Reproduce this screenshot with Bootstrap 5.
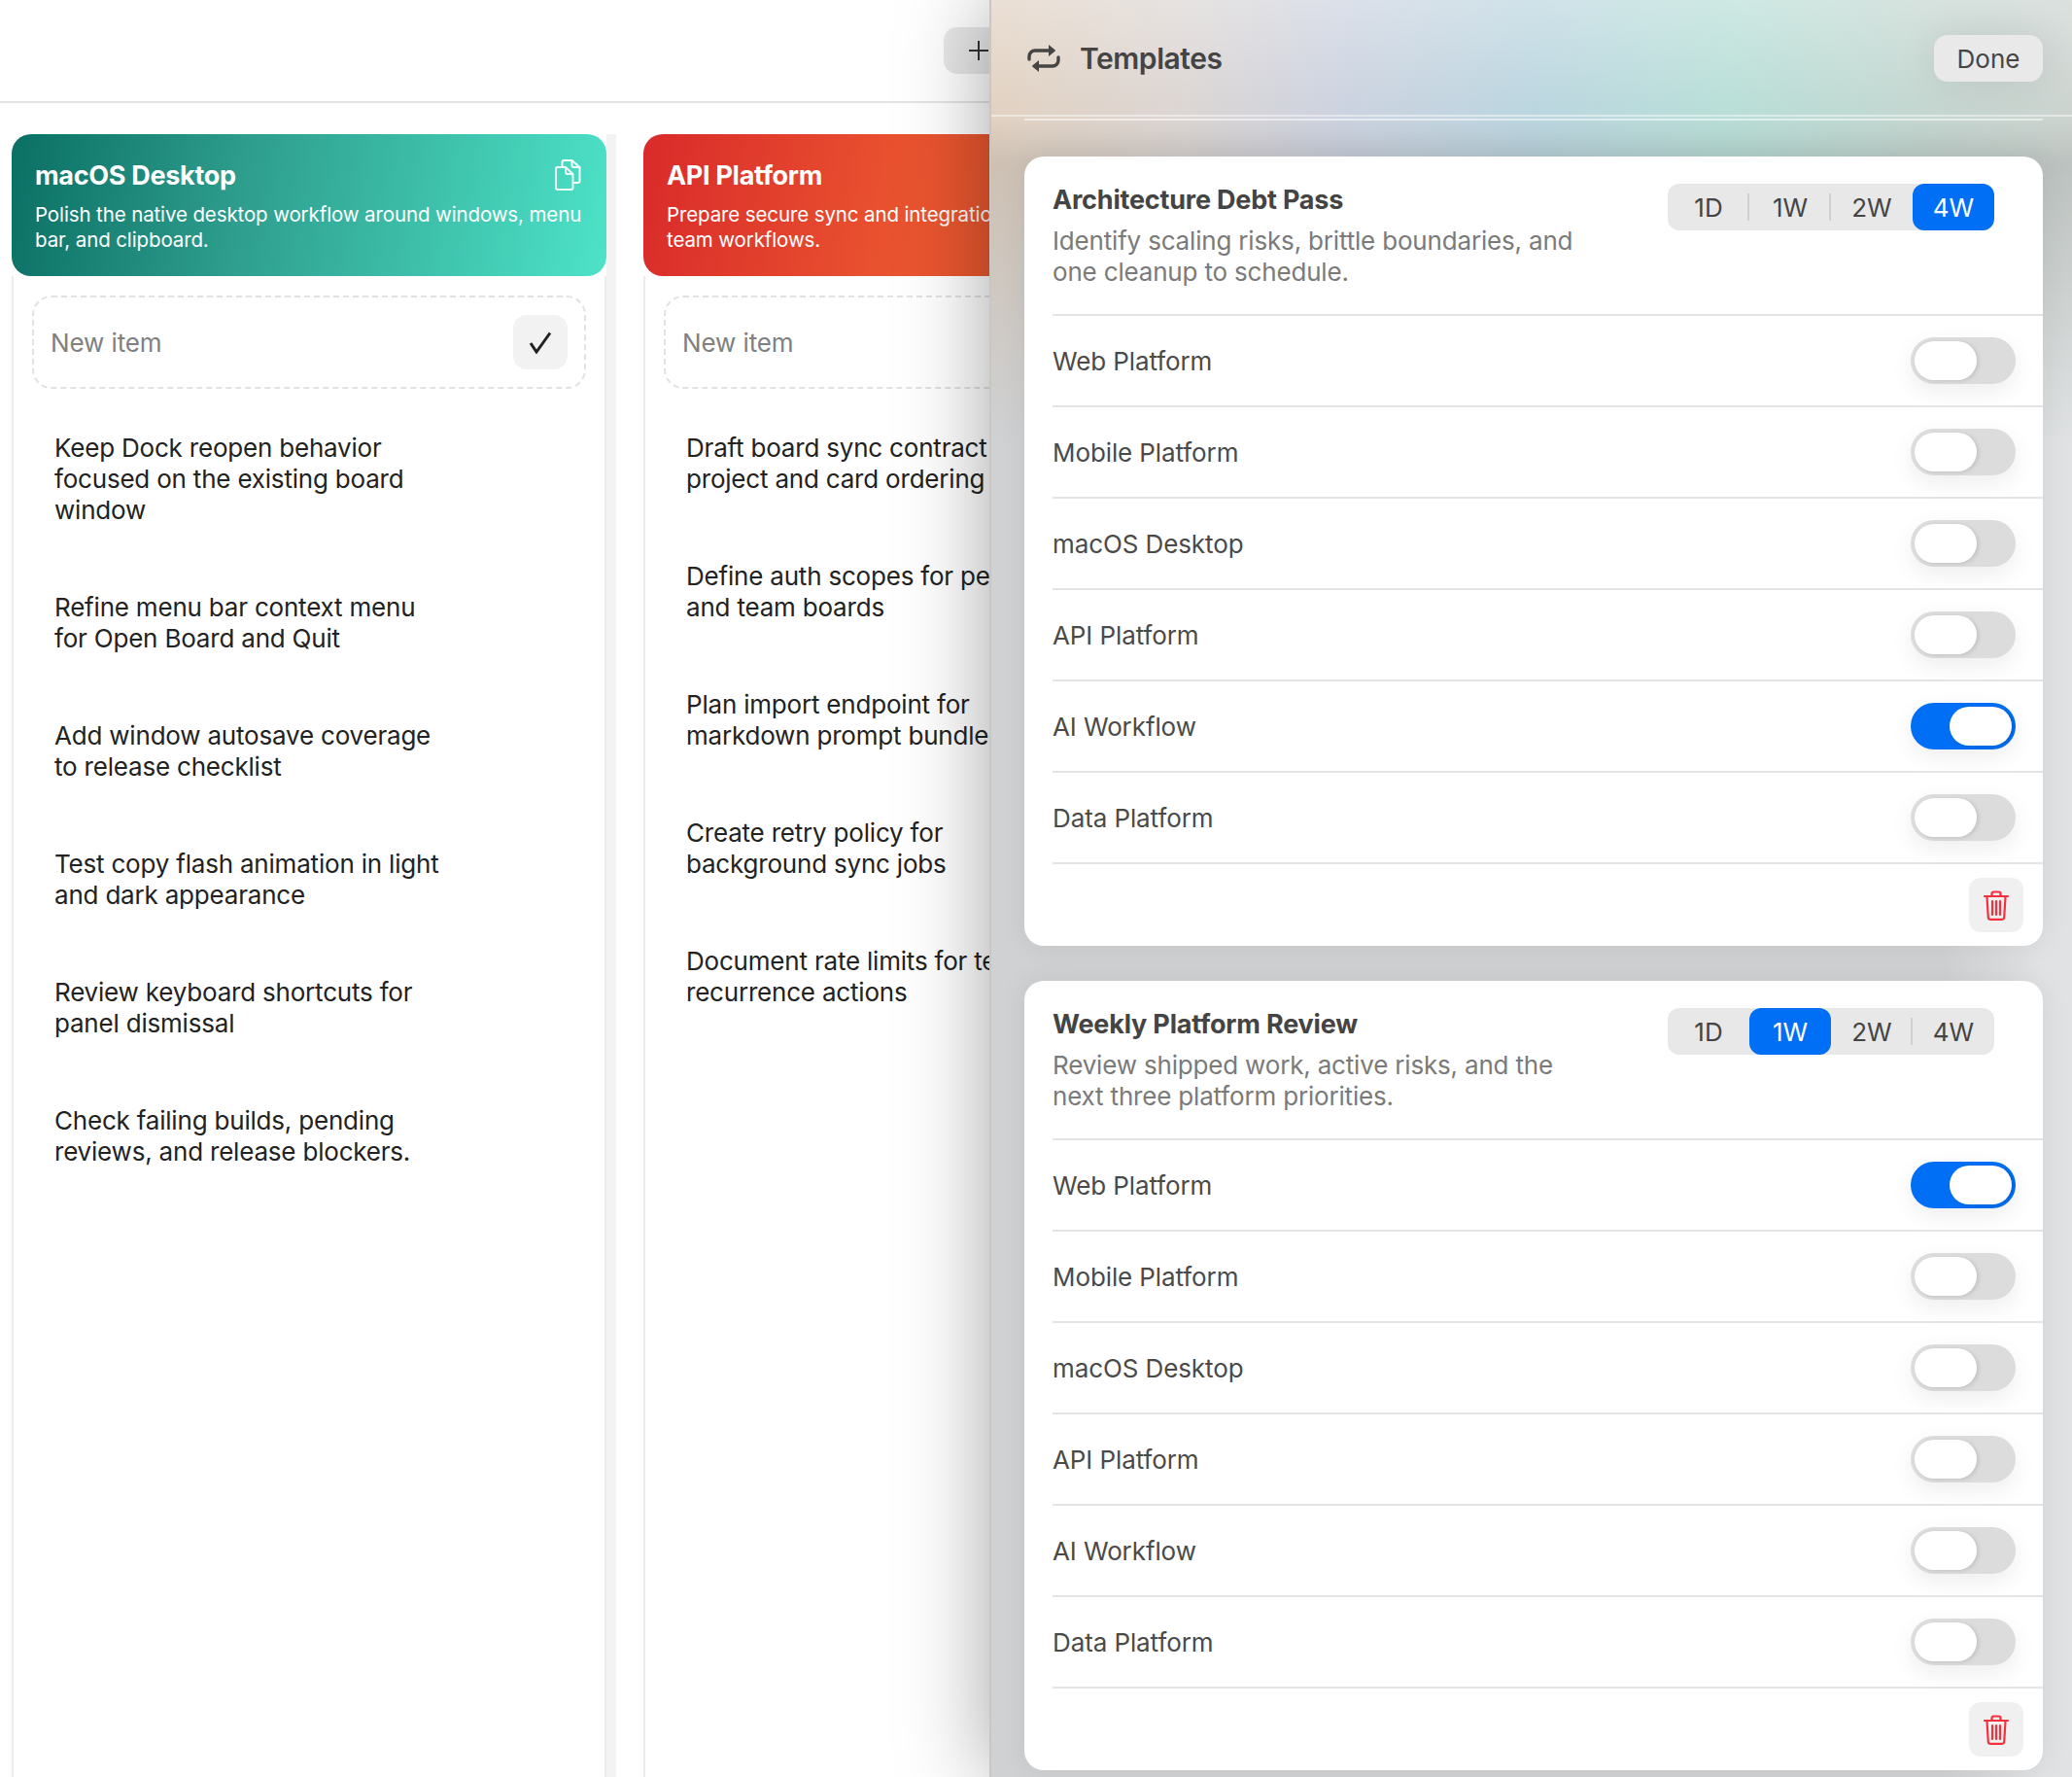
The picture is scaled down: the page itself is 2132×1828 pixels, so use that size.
<!doctype html>
<html lang="en">
<head>
<meta charset="utf-8">
<title>Templates</title>
<link href="https://cdn.jsdelivr.net/npm/bootstrap@5.3.0/dist/css/bootstrap.min.css" rel="stylesheet">
<style>
html,body{height:100%;overflow:hidden;background:#fff}
body{font-family:Inter,"Liberation Sans",sans-serif;font-size:26px;letter-spacing:-.1px}
.stage{position:relative;width:2132px;height:1828px;overflow:hidden}
.topbar{height:106px;border-bottom:2px solid #e4e4e4;padding:28px 0 0 971px}
.addbtn{width:72px;height:48px;background:#e8e8e8;border-radius:14px;padding:0 0 0 26px;border:0}
.board{padding:32px 0 0 12px;width:2400px}
.kcol{width:612px;flex:none}
.kstrip{width:10px;margin-right:28px;background:#f3f3f3;flex:none}
.khead{height:146px;border-radius:20px;padding:24px 24px 0 24px;color:#fff;position:relative}
.kgreen{background:linear-gradient(100deg,#0b6f64,#2f9f8f 40%,#4de3c8 100%)}
.kred{background:linear-gradient(100deg,#d92a2a,#e9522f 42%,#f0692f 100%)}
.ktitle{font-size:27px;font-weight:700;line-height:38px;letter-spacing:-.3px}
.kdesc{font-size:20.500px;line-height:26px;margin-top:8px;letter-spacing:-.12px;white-space:nowrap}
.kcopy{position:absolute;top:26px;right:26px}
.kbody{height:1600px;border-inline:2px solid #ececec;padding:20px 19px 0 19px}
.newbox{height:96px;border:2px dashed #e2e2e2;border-radius:20px;padding:0 17px}
.newbox span{color:#808080}
.chk{width:56px;height:56px;background:#f2f2f2;border-radius:14px;border:0;padding:0}
.kitems{margin:45px 0 0 23px}
.kitem{line-height:32px;color:#222;padding-bottom:68px;white-space:nowrap;letter-spacing:-.2px}
.panel{position:absolute;z-index:1;top:0;right:0;bottom:0;width:1114px;border-left:2px solid #c9c7c4;box-shadow:0 0 85px rgba(0,0,0,.36);
 background:
 linear-gradient(to bottom,rgba(255,255,255,.3) 0,rgba(255,255,255,0) 110px,rgba(90,90,90,0) 120px,rgba(90,90,90,.14) 165px),
 linear-gradient(to right,#e2d2c2 0,#dcd6d4 18%,#cdd3e0 32%,#bcd6e0 50%,#b9dfd8 68%,#c6d6d0 88%,#cdd4d0 100%);
}
.panel::before{content:"";position:absolute;inset:0;z-index:-1;
 background:linear-gradient(to right,#cfd1d3 0,#cfd1d3 88%,#e0e2e3 97%,#e0e2e3 100%);
 -webkit-mask-image:linear-gradient(to bottom,transparent 170px,#000 460px);mask-image:linear-gradient(to bottom,transparent 170px,#000 460px)}
.phead{height:120px;border-bottom:2px solid rgba(255,255,255,.45);padding:2px 30px 0 37px}
.ptitle{font-size:30px;font-weight:600;color:#444;margin-left:20px;letter-spacing:-.45px}
.donebtn{width:112px;height:48px;background:#e9e9e9;border:0;border-radius:14px;font-size:26px;color:#454545;padding:0;box-shadow:0 0 44px rgba(0,0,0,.09)}
.pline{height:2px;background:rgba(255,255,255,.55);margin:2px 30px 0 34px}
.tcard{margin:37px 30px 36px 34px;height:812px;border:0;border-radius:20px;background:#fff;box-shadow:0 0 30px rgba(0,0,0,.07);padding:28px 0 0 29px;overflow:hidden}
.tcard+.tcard{margin-top:0}
.thead{height:134px;padding-right:50px}
.ttitle{font-size:27px;font-weight:700;line-height:32px;color:#444;letter-spacing:-.2px;margin-top:1px}
.tsub{color:#7a7a7a;line-height:32px;margin-top:10px;white-space:nowrap;letter-spacing:-.18px}
.seg{width:336px;height:48px;background:#e8e8e8;border-radius:12px;flex:none}
.segbtn{width:84px;height:48px;border:0;padding:0;background:transparent;color:#444;font-size:26px;position:relative;border-radius:12px}
.segbtn.on{background:#006ef5;color:#fff}
.segbtn.sp::after{content:"";position:absolute;right:0;top:10px;height:28px;width:2px;background:#d0d0d0}
.trow{height:94px;border-top:2px solid #e4e4e4;padding-right:28px;color:#4a4a4a}
.tgl{width:108px;height:48px;border-radius:24px;background:#dcdcdc;padding:4px;box-shadow:0 8px 24px rgba(0,0,0,.07);flex:none}
.tgl.on{background:#006ef5;justify-content:flex-end}
.knob{width:64px;height:40px;border-radius:20px;background:#fff;box-shadow:2px 1px 4px rgba(0,0,0,.12)}
.tfoot{border-top:2px solid #e4e4e4;padding:14px 20px 0 0}
.trash{width:56px;height:56px;background:#f0f0f0;border-radius:12px;border:0;padding:0}
</style>
</head>
<body>
<div class="stage">
  <div class="topbar">
    <button class="addbtn d-flex align-items-center justify-content-start" aria-label="Add"><svg width="20" height="20" viewBox="0 0 20 20" fill="none" stroke="#333" stroke-width="2"><path d="M10 0V20M0 10H20"/></svg></button>
  </div>
  <div class="board d-flex align-items-stretch">
    <div class="kcol">
      <div class="khead kgreen">
        <div class="ktitle">macOS Desktop</div>
        <div class="kdesc">Polish the native desktop workflow around windows, menu<br>bar, and clipboard.</div>
        <svg class="kcopy" width="27" height="32" viewBox="0 0 27 32" fill="none" stroke="#f0fdfa" stroke-width="2" stroke-linejoin="round"><path d="M3 8h8l7.500 7v14a2 2 0 0 1-2 2H3a2 2 0 0 1-2-2V10a2 2 0 0 1 2-2z"/><path d="M11 8v5a2 2 0 0 0 2 2h5.500"/><path d="M7.500 8V3a2 2 0 0 1 2-2h8l8 7v14a2 2 0 0 1-2 2h-5.500"/><path d="M17.500 1v5a2 2 0 0 0 2 2h6"/></svg>
      </div>
      <div class="kbody">
        <div class="newbox d-flex align-items-center justify-content-between">
          <span>New item</span>
          <button class="chk d-flex align-items-center justify-content-center" aria-label="Add item"><svg width="24" height="23" viewBox="0 0 24 23" fill="none" stroke="#222" stroke-width="3"><path d="M2 12L8 21L22 1.500"/></svg></button>
        </div>
        <div class="kitems">
          <div class="kitem">Keep Dock reopen behavior<br>focused on the existing board<br>window</div>
          <div class="kitem">Refine menu bar context menu<br>for Open Board and Quit</div>
          <div class="kitem">Add window autosave coverage<br>to release checklist</div>
          <div class="kitem">Test copy flash animation in light<br>and dark appearance</div>
          <div class="kitem">Review keyboard shortcuts for<br>panel dismissal</div>
          <div class="kitem">Check failing builds, pending<br>reviews, and release blockers.</div>
        </div>
      </div>
    </div>
    <div class="kstrip"></div>
    <div class="kcol">
      <div class="khead kred">
        <div class="ktitle">API Platform</div>
        <div class="kdesc">Prepare secure sync and integration APIs for<br>team workflows.</div>
      </div>
      <div class="kbody">
        <div class="newbox d-flex align-items-center justify-content-between">
          <span>New item</span>
        </div>
        <div class="kitems">
          <div class="kitem">Draft board sync contract for<br>project and card ordering</div>
          <div class="kitem">Define auth scopes for personal<br>and team boards</div>
          <div class="kitem">Plan import endpoint for<br>markdown prompt bundles</div>
          <div class="kitem">Create retry policy for<br>background sync jobs</div>
          <div class="kitem">Document rate limits for team<br>recurrence actions</div>
        </div>
      </div>
    </div>
  </div>

  <aside class="panel">
    <div class="phead d-flex align-items-center">
      <svg width="34" height="28" viewBox="0 0 34 28" fill="#444"><path d="M2 15V12a6 6 0 0 1 6-6H23" fill="none" stroke="#444" stroke-width="3.400" stroke-linecap="round"/><path d="M22 0l6.500 5.200a1 1 0 0 1 0 1.600L22 12z"/><path d="M32 13v3a6 6 0 0 1-6 6H11" fill="none" stroke="#444" stroke-width="3.400" stroke-linecap="round"/><path d="M12 16l-6.500 5.200a1 1 0 0 0 0 1.600L12 28z"/></svg>
      <div class="ptitle">Templates</div>
      <button class="donebtn ms-auto">Done</button>
    </div>
    <div class="pline"></div>

    <div class="card tcard">
      <div class="thead d-flex justify-content-between">
        <div>
          <div class="ttitle">Architecture Debt Pass</div>
          <div class="tsub">Identify scaling risks, brittle boundaries, and<br>one cleanup to schedule.</div>
        </div>
        <div class="seg d-flex">
          <button class="segbtn sp">1D</button><button class="segbtn sp">1W</button><button class="segbtn">2W</button><button class="segbtn on">4W</button>
        </div>
      </div>
      <div class="trow d-flex align-items-center justify-content-between"><span>Web Platform</span><div class="tgl d-flex"><div class="knob"></div></div></div>
      <div class="trow d-flex align-items-center justify-content-between"><span>Mobile Platform</span><div class="tgl d-flex"><div class="knob"></div></div></div>
      <div class="trow d-flex align-items-center justify-content-between"><span>macOS Desktop</span><div class="tgl d-flex"><div class="knob"></div></div></div>
      <div class="trow d-flex align-items-center justify-content-between"><span>API Platform</span><div class="tgl d-flex"><div class="knob"></div></div></div>
      <div class="trow d-flex align-items-center justify-content-between"><span>AI Workflow</span><div class="tgl on d-flex"><div class="knob"></div></div></div>
      <div class="trow d-flex align-items-center justify-content-between"><span>Data Platform</span><div class="tgl d-flex"><div class="knob"></div></div></div>
      <div class="tfoot d-flex justify-content-end">
        <button class="trash d-flex align-items-center justify-content-center" aria-label="Delete"><svg width="26" height="31" viewBox="0 0 26 31" fill="none" stroke="#f5303c" stroke-width="2.200" stroke-linecap="round"><path d="M1 6H25M8.500 5.500V3.500a2 2 0 0 1 2-2h5a2 2 0 0 1 2 2v2M3.500 6.500l1.300 21.500a2 2 0 0 0 2 1.800h12.400a2 2 0 0 0 2-1.800l1.300-21.500M9 11v14M13 11v14M17 11v14"/></svg></button>
      </div>
    </div>

    <div class="card tcard">
      <div class="thead d-flex justify-content-between">
        <div>
          <div class="ttitle">Weekly Platform Review</div>
          <div class="tsub">Review shipped work, active risks, and the<br>next three platform priorities.</div>
        </div>
        <div class="seg d-flex">
          <button class="segbtn">1D</button><button class="segbtn on">1W</button><button class="segbtn sp">2W</button><button class="segbtn">4W</button>
        </div>
      </div>
      <div class="trow d-flex align-items-center justify-content-between"><span>Web Platform</span><div class="tgl on d-flex"><div class="knob"></div></div></div>
      <div class="trow d-flex align-items-center justify-content-between"><span>Mobile Platform</span><div class="tgl d-flex"><div class="knob"></div></div></div>
      <div class="trow d-flex align-items-center justify-content-between"><span>macOS Desktop</span><div class="tgl d-flex"><div class="knob"></div></div></div>
      <div class="trow d-flex align-items-center justify-content-between"><span>API Platform</span><div class="tgl d-flex"><div class="knob"></div></div></div>
      <div class="trow d-flex align-items-center justify-content-between"><span>AI Workflow</span><div class="tgl d-flex"><div class="knob"></div></div></div>
      <div class="trow d-flex align-items-center justify-content-between"><span>Data Platform</span><div class="tgl d-flex"><div class="knob"></div></div></div>
      <div class="tfoot d-flex justify-content-end">
        <button class="trash d-flex align-items-center justify-content-center" aria-label="Delete"><svg width="26" height="31" viewBox="0 0 26 31" fill="none" stroke="#f5303c" stroke-width="2.200" stroke-linecap="round"><path d="M1 6H25M8.500 5.500V3.500a2 2 0 0 1 2-2h5a2 2 0 0 1 2 2v2M3.500 6.500l1.300 21.500a2 2 0 0 0 2 1.800h12.400a2 2 0 0 0 2-1.800l1.300-21.500M9 11v14M13 11v14M17 11v14"/></svg></button>
      </div>
    </div>
  </aside>
</div>
<script src="https://cdn.jsdelivr.net/npm/bootstrap@5.3.0/dist/js/bootstrap.bundle.min.js"></script>
</body>
</html>
